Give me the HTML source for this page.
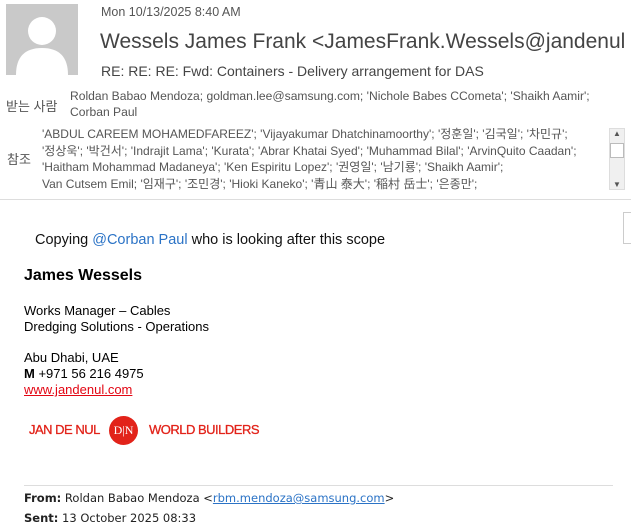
<!DOCTYPE html>
<html><head><meta charset="utf-8"><style>
*{margin:0;padding:0;box-sizing:border-box}
body{width:631px;height:525px;overflow:hidden;background:#fff;position:relative;font-family:"Liberation Sans","Noto Sans CJK KR",sans-serif;color:#444}
.a{position:absolute;white-space:nowrap}
.hd{font-size:12px;color:#555}
.b{font-family:"Liberation Sans",Arial,sans-serif;color:#000;font-size:13px}
.lg{font-family:"Liberation Sans",sans-serif;font-size:13px;color:#e2231a;letter-spacing:-0.5px;-webkit-text-stroke:0.3px #e2231a}
</style></head><body>
<div class="a" style="left:6px;top:4px;width:72px;height:71px;background:#c9c9c9;overflow:hidden">
<svg width="72" height="71"><circle cx="36" cy="27" r="14" fill="#fff"/><path d="M10 71 Q10 44 36 44 Q62 44 62 71Z" fill="#fff"/></svg></div>
<div class="a hd" style="left:101px;top:5px;font-size:12.5px">Mon 10/13/2025 8:40 AM</div>
<div class="a" style="left:100px;top:30px;font-size:21px;color:#444">Wessels James Frank &lt;JamesFrank.Wessels@jandenul</div>
<div class="a" style="left:101px;top:63px;font-size:14px;color:#444">RE: RE: RE: Fwd: Containers - Delivery arrangement for DAS</div>
<div class="a hd" style="left:6px;top:96px;font-size:13px">받는 사람</div>
<div class="a hd" style="left:70px;top:88px;line-height:16px;font-size:12.1px">Roldan Babao Mendoza; goldman.lee@samsung.com; 'Nichole Babes CCometa'; 'Shaikh Aamir';<br>Corban Paul</div>
<div class="a hd" style="left:7px;top:149px;font-size:13px">참조</div>
<div class="a hd" style="left:42px;top:126px;line-height:16.5px;font-size:12px">'ABDUL CAREEM MOHAMEDFAREEZ'; 'Vijayakumar Dhatchinamoorthy'; '정훈일'; '김국일'; '차민규';<br>'정상욱'; '박건서'; 'Indrajit Lama'; 'Kurata'; 'Abrar Khatai Syed'; 'Muhammad Bilal'; 'ArvinQuito Caadan';<br>'Haitham Mohammad Madaneya'; 'Ken Espiritu Lopez'; '권영일'; '남기룡'; 'Shaikh Aamir';<br>Van Cutsem Emil; '임재구'; '조민경'; 'Hioki Kaneko'; '青山 泰大'; '稲村 岳士'; '은종만';</div>
<div class="a" style="left:609px;top:128px;width:16px;height:62px;background:#f0f0f0;border:1px solid #ddd">
<div style="height:14px;font-size:8px;text-align:center;color:#555">▲</div>
<div style="height:15px;background:#fff;border:1px solid #bbb"></div>
<div style="position:absolute;bottom:0;width:14px;font-size:8px;text-align:center;color:#555">▼</div></div>
<div class="a" style="left:0;top:199px;width:631px;height:1px;background:#ddd"></div>
<div class="a" style="left:623px;top:212px;width:8px;height:32px;border:1px solid #ccc;border-right:none"></div>
<div class="a b" style="left:35px;top:232px;font-size:14.5px;color:#111">Copying <span style="color:#2b73c6">@Corban Paul</span> who is looking after this scope</div>
<div class="a b" style="left:24px;top:267px;font-size:16px;font-weight:bold">James Wessels</div>
<div class="a b" style="left:24px;top:303px;line-height:16px">Works Manager – Cables<br>Dredging Solutions - Operations</div>
<div class="a b" style="left:24px;top:350px;line-height:16px">Abu Dhabi, UAE<br><b>M</b> +971 56 216 4975<br><span style="color:#e30613;text-decoration:underline">www.jandenul.com</span></div>
<div class="a lg" style="left:29px;top:422px">JAN DE NUL</div>
<div class="a" style="left:109px;top:416px;width:29px;height:29px;border-radius:50%;background:#e2231a;color:#fff;font-family:'Liberation Serif',serif;font-size:12px;text-align:center;line-height:29px">D|N</div>
<div class="a lg" style="left:149px;top:422px">WORLD BUILDERS</div>
<div class="a" style="left:24px;top:485px;width:589px;height:1px;background:#ddd"></div>
<div class="a" style="left:24px;top:491px;color:#222;font-family:'DejaVu Sans','Liberation Sans',sans-serif;font-size:11.5px"><b>From:</b> Roldan Babao Mendoza &lt;<span style="color:#2b73c6;text-decoration:underline">rbm.mendoza@samsung.com</span>&gt;</div>
<div class="a" style="left:24px;top:511px;color:#222;font-family:'DejaVu Sans','Liberation Sans',sans-serif;font-size:11.5px"><b>Sent:</b> 13 October 2025 08:33</div>
</body></html>
